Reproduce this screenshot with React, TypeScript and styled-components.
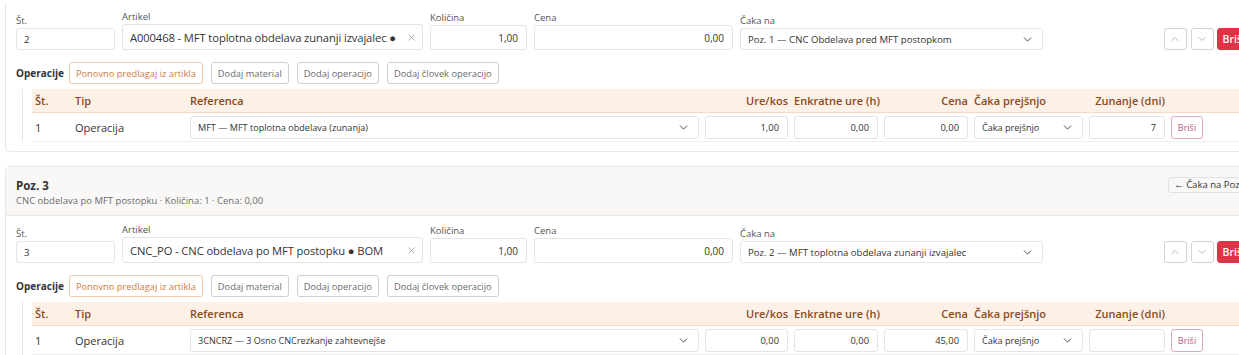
import React from 'react';
import styled, { createGlobalStyle } from 'styled-components';
import { ChevronDown, ChevronUp, X } from 'lucide-react';

interface OpRow {
  id: number;
  tip: string;
  referenca: string;
  ureKos: string;
  enkratne: string;
  cena: string;
  zunanje: string;
}

interface PozData {
  id: number;
  st: string;
  artikel: string;
  kolicina: string;
  cena: string;
  cakaNa: string;
  summary?: string;
  cakaBtn?: string;
  ops: OpRow[];
}

const GlobalStyle = createGlobalStyle`
  html, body {
    margin: 0;
    padding: 0;
    background: #fff;
    overflow: hidden;
  }
  body {
    font-family: "Open Sans", "Noto Sans", "Liberation Sans", sans-serif;
    color: #333;
  }
`;

const Page = styled.div`
  width: 1261px;
  padding: 3px 0 0 5px;
  display: flex;
  flex-direction: column;
  gap: 14px;
`;

const Card = styled.div<{ $cut?: boolean }>`
  border: 1px solid #ece6e1;
  border-top: ${(p) => (p.$cut ? 'none' : '1px solid #ece6e1')};
  border-radius: ${(p) => (p.$cut ? '0 0 6px 6px' : '6px')};
  background: #fff;
`;

const CardHeader = styled.div`
  display: flex;
  justify-content: space-between;
  align-items: flex-start;
  padding: 11px 10px 7px;
  background: #faf8f6;
  border-bottom: 1px solid #ece6e1;
  border-radius: 6px 6px 0 0;
`;

const HeaderTitle = styled.div`
  font-size: 11.5px;
  font-weight: 700;
  line-height: 16px;
  color: #333;
`;

const HeaderSub = styled.div`
  font-size: 9.5px;
  line-height: 14px;
  color: #6b6b6b;
`;

const BackBtn = styled.button`
  font-family: inherit;
  font-size: 9.5px;
  line-height: 14px;
  padding: 0 6px 0 5px;
  margin-top: -1px;
  margin-right: -2px;
  color: #333;
  background: #f8f8f8;
  border: 1px solid #e2e2e2;
  border-radius: 3px;
  white-space: nowrap;
`;

const CardBody = styled.div`
  padding: 7px 10px 9px;
`;

const FormRow = styled.div`
  display: grid;
  grid-template-columns: 99px 301px 97px 199px 303px 1fr auto;
  column-gap: 7px;
  align-items: end;
`;

const Field = styled.div`
  display: flex;
  flex-direction: column;
`;

const Label = styled.label`
  font-size: 9.5px;
  line-height: 13px;
  color: #555;
  margin-bottom: 1px;
`;

const Input = styled.div<{ $h: number; $right?: boolean; $size?: number }>`
  height: ${(p) => p.$h}px;
  box-sizing: border-box;
  border: 1px solid #e4e4e4;
  border-radius: 3px;
  display: flex;
  align-items: center;
  justify-content: ${(p) => (p.$right ? 'flex-end' : 'flex-start')};
  padding: 0 8px 0 7px;
  font-size: ${(p) => p.$size ?? 9.6}px;
  color: #333;
  background: #fff;
  white-space: nowrap;
  overflow: hidden;
`;

const ArtikelInput = styled(Input)`
  padding: 0 5px 0 7px;
  letter-spacing: -0.1px;
`;

const InputText = styled.span`
  flex: 1;
  overflow: hidden;
`;

const Clear = styled.span`
  display: flex;
  color: #888;
  margin-left: 3px;
`;

const RowActions = styled.div`
  display: flex;
  gap: 4px;
  align-items: flex-end;
`;

const IconBtn = styled.button`
  width: 23px;
  height: 22px;
  padding: 0;
  display: flex;
  align-items: center;
  justify-content: center;
  background: #fff;
  border: 1px solid #d2d2d2;
  border-radius: 3px;
  color: #999;
`;

const DangerBtn = styled.button`
  font-family: inherit;
  height: 22px;
  padding: 0 9px 0 5px;
  font-size: 10.5px;
  font-weight: 600;
  color: #fff;
  background: #dc3545;
  border: 1px solid #dc3545;
  border-radius: 3px;
  margin-left: -1px;
`;

const OpsBar = styled.div`
  display: flex;
  align-items: center;
  gap: 8px;
  margin-top: 12px;
`;

const OpsLabel = styled.span`
  font-size: 10px;
  font-weight: 700;
  color: #333;
  margin-right: -3px;
`;

const OpsBtn = styled.button<{ $accent?: boolean }>`
  font-family: inherit;
  height: 22px;
  box-sizing: border-box;
  padding: 0 6px;
  font-size: 9.3px;
  color: ${(p) => (p.$accent ? '#cf7b3c' : '#6c6c6c')};
  background: #fff;
  border: 1px solid ${(p) => (p.$accent ? '#f2cca9' : '#cfcfcf')};
  border-radius: 3px;
`;

const TableWrap = styled.div`
  margin: 5px 0 0 6px;
  padding-left: 9px;
  border-left: 1px solid #e8e8e8;
`;

const GridRow = styled.div<{ $head?: boolean }>`
  display: grid;
  grid-template-columns: 34px 109px 509px 83px 84px 84px 109px 76px 32px 1fr;
  column-gap: 6px;
  align-items: center;
  padding-left: 3px;
  height: ${(p) => (p.$head ? '23px' : '28px')};
  background: ${(p) => (p.$head ? '#fdf1e7' : '#fff')};
  border-bottom: 1px solid ${(p) => (p.$head ? '#f3dac6' : '#eeeeee')};
`;

const Th = styled.div<{ $right?: boolean }>`
  font-size: 11px;
  font-weight: 600;
  color: #8a4a22;
  text-align: ${(p) => (p.$right ? 'right' : 'left')};
  white-space: nowrap;
`;

const Td = styled.div`
  font-size: 11px;
  color: #333;
  white-space: nowrap;
`;

const SmallBtn = styled.button`
  font-family: inherit;
  height: 23px;
  padding: 0;
  font-size: 9px;
  color: #c25a7e;
  background: #fff;
  border: 1px solid #dcaabd;
  border-radius: 3px;
`;

const Chevron = () => <ChevronDown size={13} strokeWidth={1.6} color="#333" />;

const DATA: PozData[] = [
  {
    id: 2,
    st: '2',
    artikel: 'A000468 - MFT toplotna obdelava zunanji izvajalec \u25CF',
    kolicina: '1,00',
    cena: '0,00',
    cakaNa: 'Poz. 1 \u2014 CNC Obdelava pred MFT postopkom',
    ops: [
      {
        id: 1,
        tip: 'Operacija',
        referenca: 'MFT \u2014 MFT toplotna obdelava (zunanja)',
        ureKos: '1,00',
        enkratne: '0,00',
        cena: '0,00',
        zunanje: '7',
      },
    ],
  },
  {
    id: 3,
    st: '3',
    artikel: 'CNC_PO - CNC obdelava po MFT postopku \u25CF BOM',
    kolicina: '1,00',
    cena: '0,00',
    cakaNa: 'Poz. 2 \u2014 MFT toplotna obdelava zunanji izvajalec',
    summary: 'CNC obdelava po MFT postopku \u00B7 Koli\u010Dina: 1 \u00B7 Cena: 0,00',
    cakaBtn: '\u2190 \u010Caka na Poz. 2',
    ops: [
      {
        id: 1,
        tip: 'Operacija',
        referenca: '3CNCRZ \u2014 3 Osno CNCrezkanje zahtevnej\u0161e',
        ureKos: '0,00',
        enkratne: '0,00',
        cena: '45,00',
        zunanje: '',
      },
    ],
  },
];

const PozCard = ({ poz, cut }: { poz: PozData; cut?: boolean }) => (
  <Card $cut={cut}>
    {poz.summary && (
      <CardHeader>
        <div>
          <HeaderTitle>{`Poz. ${poz.id}`}</HeaderTitle>
          <HeaderSub>{poz.summary}</HeaderSub>
        </div>
        <BackBtn>{poz.cakaBtn}</BackBtn>
      </CardHeader>
    )}
    <CardBody>
      <FormRow>
        <Field>
          <Label>{'Št.'}</Label>
          <Input $h={22}>{poz.st}</Input>
        </Field>
        <Field>
          <Label>{'Artikel'}</Label>
          <ArtikelInput $h={26} $size={11.2}>
            <InputText>{poz.artikel}</InputText>
            <Clear>
              <X size={11} strokeWidth={1.4} />
            </Clear>
          </ArtikelInput>
        </Field>
        <Field>
          <Label>{'Količina'}</Label>
          <Input $h={25} $right $size={10}>
            {poz.kolicina}
          </Input>
        </Field>
        <Field>
          <Label>{'Cena'}</Label>
          <Input $h={25} $right $size={10}>
            {poz.cena}
          </Input>
        </Field>
        <Field>
          <Label>{'Čaka na'}</Label>
          <Input $h={22}>
            <InputText>{poz.cakaNa}</InputText>
            <Chevron />
          </Input>
        </Field>
        <div />
        <RowActions>
          <IconBtn>
            <ChevronUp size={12} strokeWidth={1.4} />
          </IconBtn>
          <IconBtn>
            <ChevronDown size={12} strokeWidth={1.4} />
          </IconBtn>
          <DangerBtn>{'Briši'}</DangerBtn>
        </RowActions>
      </FormRow>

      <OpsBar>
        <OpsLabel>{'Operacije'}</OpsLabel>
        <OpsBtn $accent>{'Ponovno predlagaj iz artikla'}</OpsBtn>
        <OpsBtn>{'Dodaj material'}</OpsBtn>
        <OpsBtn>{'Dodaj operacijo'}</OpsBtn>
        <OpsBtn>{'Dodaj človek operacijo'}</OpsBtn>
      </OpsBar>

      <TableWrap>
        <GridRow $head>
          <Th>{'Št.'}</Th>
          <Th>{'Tip'}</Th>
          <Th>{'Referenca'}</Th>
          <Th $right>{'Ure/kos'}</Th>
          <Th $right>{'Enkratne ure (h)'}</Th>
          <Th $right>{'Cena'}</Th>
          <Th>{'Čaka prejšnjo'}</Th>
          <Th $right>{'Zunanje (dni)'}</Th>
          <div />
          <div />
        </GridRow>
        {poz.ops.map((op) => (
          <GridRow key={op.id}>
            <Td>{op.id}</Td>
            <Td>{op.tip}</Td>
            <Input $h={23} $size={9.1}>
              <InputText>{op.referenca}</InputText>
              <Chevron />
            </Input>
            <Input $h={23} $right $size={9.4}>
              {op.ureKos}
            </Input>
            <Input $h={23} $right $size={9.4}>
              {op.enkratne}
            </Input>
            <Input $h={23} $right $size={9.4}>
              {op.cena}
            </Input>
            <Input $h={23} $size={9.1}>
              <InputText>{'Čaka prejšnjo'}</InputText>
              <Chevron />
            </Input>
            <Input $h={23} $right $size={9.4}>
              {op.zunanje}
            </Input>
            <SmallBtn>{'Briši'}</SmallBtn>
            <div />
          </GridRow>
        ))}
      </TableWrap>
    </CardBody>
  </Card>
);

const App = () => (
  <>
    <GlobalStyle />
    <Page>
      {DATA.map((poz, i) => (
        <PozCard key={poz.id} poz={poz} cut={i === 0} />
      ))}
    </Page>
  </>
);

export default App;
